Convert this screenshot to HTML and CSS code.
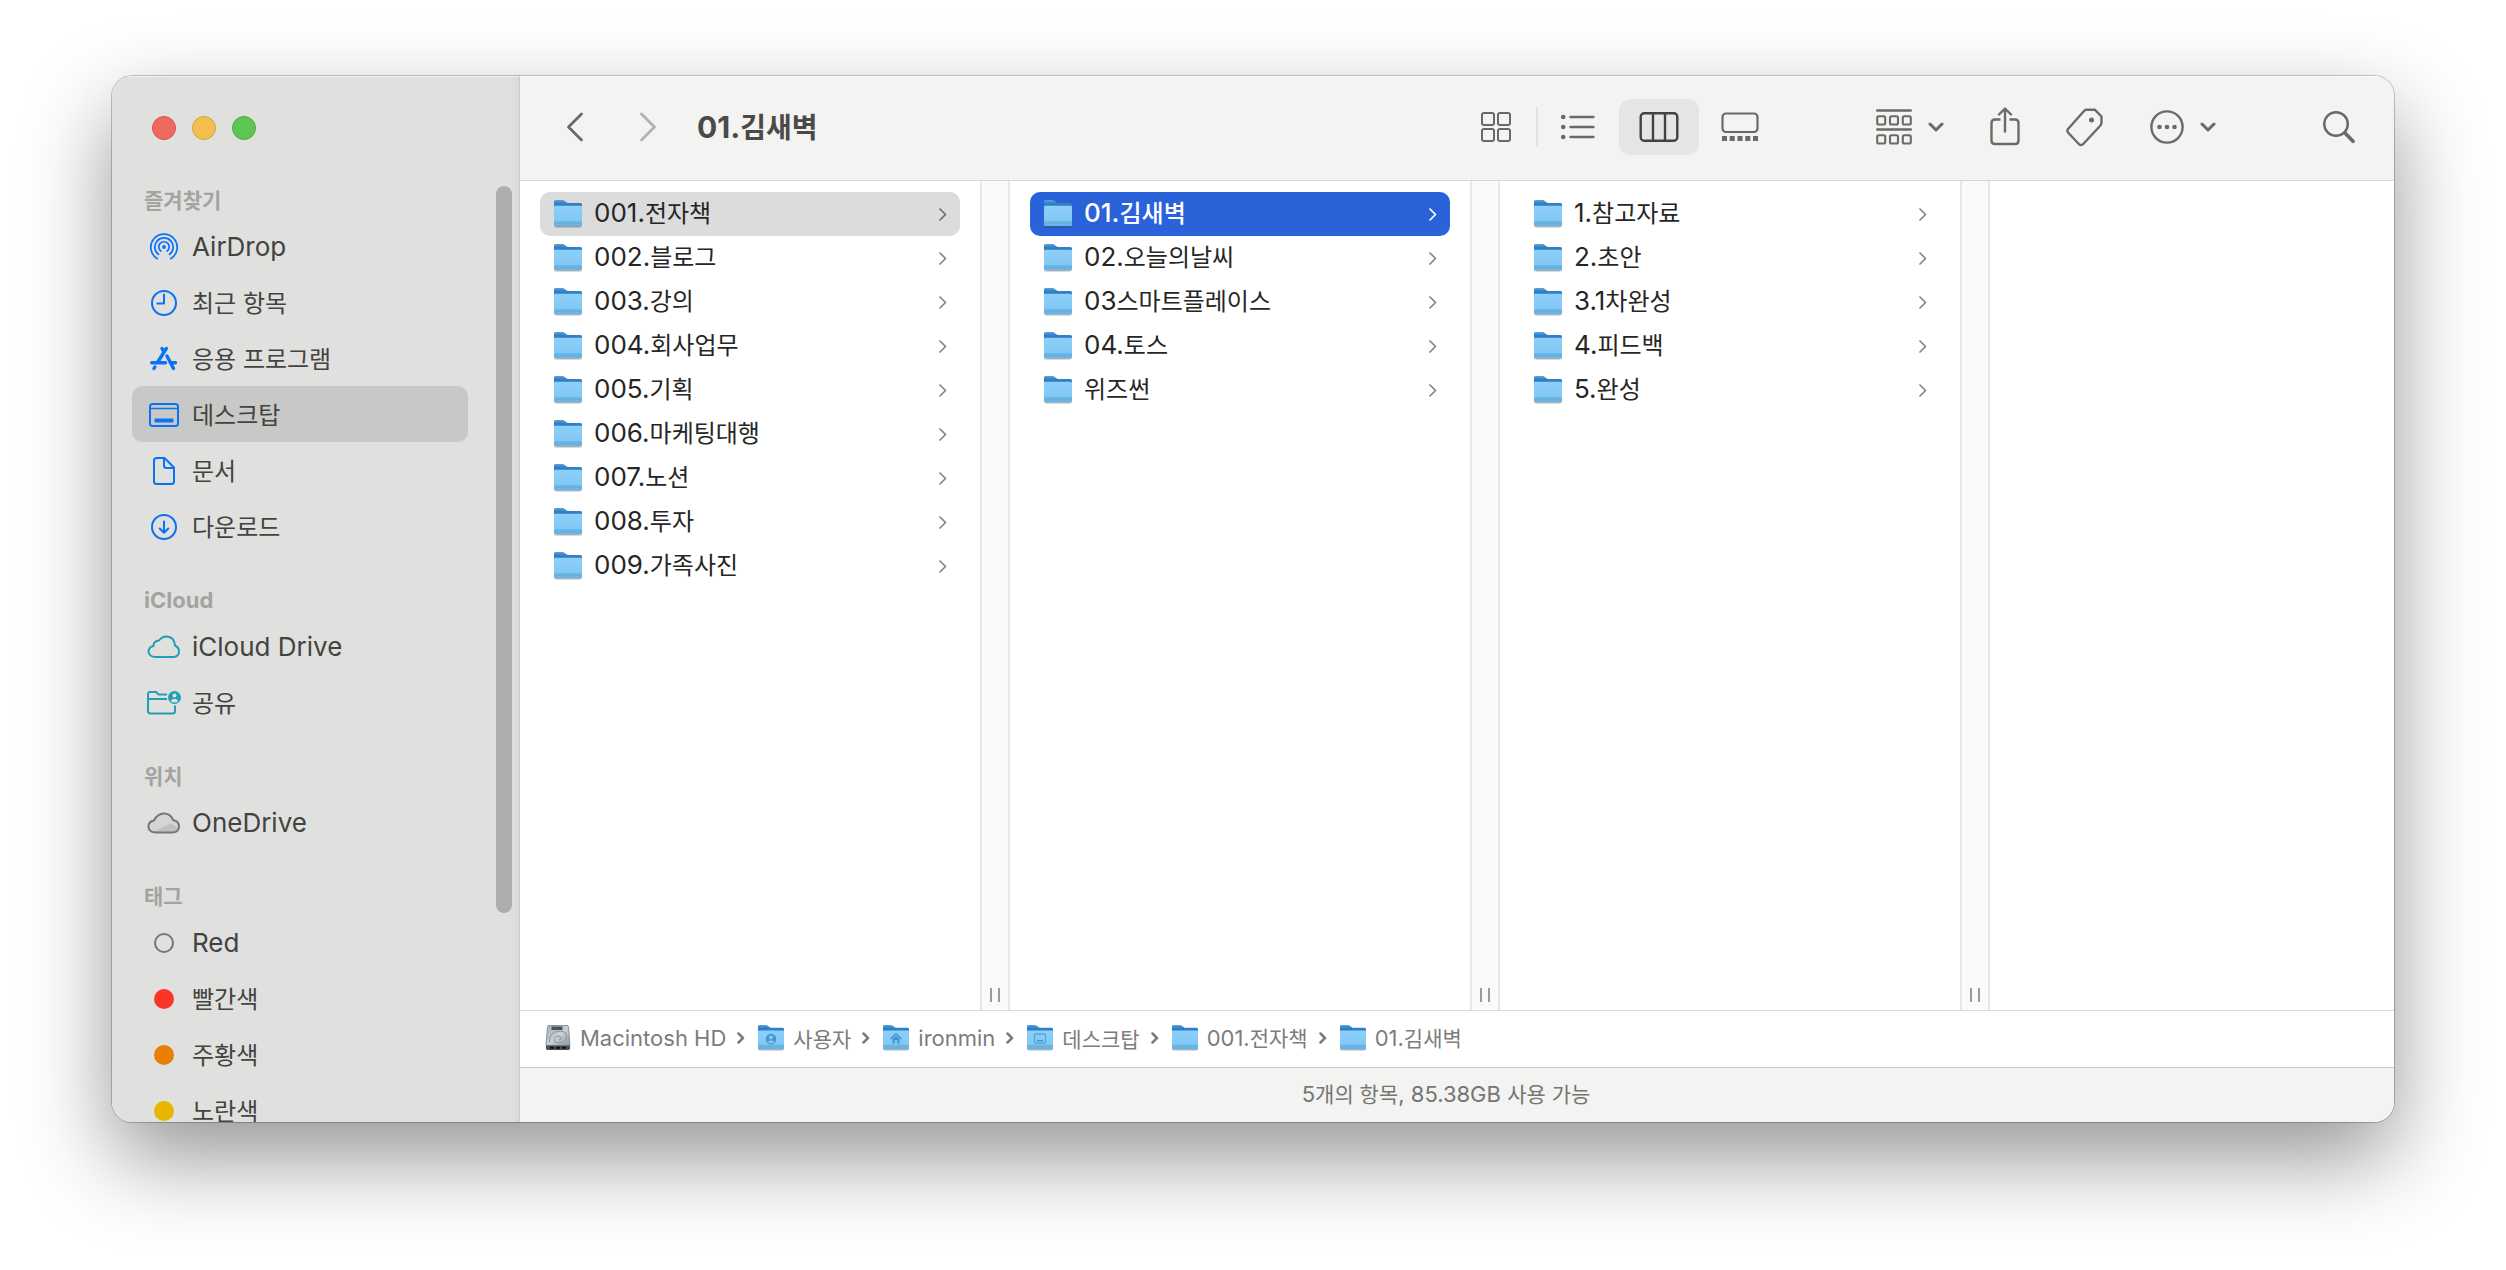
FILE: index.html
```html
<!DOCTYPE html>
<html lang="ko">
<head>
<meta charset="utf-8">
<title>01.김새벽</title>
<link rel="stylesheet" href="styles.css">
</head>
<body>
<svg class="sprite" aria-hidden="true">
  <defs>
    <linearGradient id="folder-back" x1="0" y1="0" x2="0" y2="1">
      <stop offset="0" stop-color="#58a5da"/><stop offset=".25" stop-color="#2f7ec6"/><stop offset="1" stop-color="#2f7ec6"/>
    </linearGradient>
    <linearGradient id="folder-front" x1="0" y1="0" x2="0" y2="1">
      <stop offset="0" stop-color="#8ccff9"/><stop offset=".75" stop-color="#82c8f5"/><stop offset=".8" stop-color="#70b9e8"/><stop offset="1" stop-color="#69b2e2"/>
    </linearGradient>
    <linearGradient id="drive-top" x1="0" y1="0" x2="1" y2="1">
      <stop offset="0" stop-color="#a3adb3"/><stop offset=".5" stop-color="#c6d0d5"/><stop offset="1" stop-color="#8f999f"/>
    </linearGradient>
    <symbol id="folder" viewBox="0 0 28 28">
      <rect x="0.5" y="5" width="27" height="22.5" rx="1.5" fill="#000" opacity=".28"/>
      <path d="M0 1.500Q0 0 1.500 0H8.500Q9.800 0 10.800 1L12 2Q13 3 14.200 3H26.500Q28 3 28 4.500V14H0Z" fill="url(#folder-back)"/>
      <path d="M0 7Q0 5.800 1.200 5.800H26.800Q28 5.800 28 7V25Q28 26.300 26.700 26.300H1.300Q0 26.300 0 25Z" fill="url(#folder-front)"/>
      <path d="M0 21.700H28M0 23.500H28" stroke="#5da7d8" stroke-width=".6"/>
    </symbol>
    <symbol id="chevron" viewBox="0 0 8 13"><path d="M1 1L6.500 6.500L1 12" fill="none" stroke="currentColor" stroke-width="1.700" stroke-linecap="round" stroke-linejoin="round"/></symbol>
    <symbol id="crumb" viewBox="0 0 8 12"><path d="M1.500 1.500L6 6L1.500 10.500" fill="none" stroke="currentColor" stroke-width="2.500" stroke-linecap="round" stroke-linejoin="round"/></symbol>
    <symbol id="down" viewBox="0 0 16 12"><path d="M2 3L8 9L14 3" fill="none" stroke="currentColor" stroke-width="3" stroke-linecap="round" stroke-linejoin="round"/></symbol>
  </defs>
</svg>

<div class="window">
  <aside class="sidebar">
    <div class="lights">
      <button class="light close" aria-label="닫기"></button>
      <button class="light minimize" aria-label="최소화"></button>
      <button class="light expand" aria-label="확대"></button>
    </div>
    <nav class="places">
      <section>
        <h2><span class="ko">즐겨찾기</span></h2>
        <ul>
          <li><a href="#"><svg class="blue" width="36" height="30" viewBox="0 0 36 30" fill="none" stroke="currentColor" stroke-width="1.700" stroke-linecap="round"><circle cx="18" cy="15" r="1.900" fill="currentColor" stroke="none"/><path d="M14.900 19.100A5.200 5.200 0 1 1 21.100 19.100M12.500 22.400A9.200 9.200 0 1 1 23.500 22.400M11.300 26.700A13.200 13.200 0 1 1 24.700 26.700"/></svg>AirDrop</a></li>
          <li><a href="#"><svg class="blue" width="36" height="30" viewBox="0 0 36 30" fill="none" stroke="currentColor" stroke-width="2" stroke-linecap="round" stroke-linejoin="round"><circle cx="18" cy="15" r="12"/><path d="M18 6.500V15.500H11.300"/></svg><span class="ko">최근 항목</span></a></li>
          <li><a href="#"><svg class="blue" width="36" height="30" viewBox="0 0 36 30" fill="none" stroke="currentColor" stroke-width="3.400" stroke-linecap="round"><path d="M16 4.500L17.500 7.200M20.300 4.500L11.500 18.500M5.700 18.800H19.500M8 24.500L8.900 23M21 12L27.500 24.500M25.500 18.800H29.500"/></svg><span class="ko">응용 프로그램</span></a></li>
          <li><a href="#" class="current" aria-current="page"><svg class="blue" width="36" height="30" viewBox="0 0 36 30" fill="none" stroke="currentColor" stroke-width="2"><rect x="4" y="4" width="28" height="22" rx="2.500"/><path d="M4 8.500H32" stroke-width="1.500"/><rect x="8.500" y="18.500" width="19" height="4" rx="1" fill="currentColor" stroke="none"/></svg><span class="ko">데스크탑</span></a></li>
          <li><a href="#"><svg class="blue" width="36" height="30" viewBox="0 0 36 30" fill="none" stroke="currentColor" stroke-width="2" stroke-linejoin="round"><path d="M11 2H18.500L28 11.500V25.500Q28 28 25.500 28H10.500Q8 28 8 25.500V4.500Q8 2 11 2ZM18 2V9.500Q18 12 20.500 12H28"/></svg><span class="ko">문서</span></a></li>
          <li><a href="#"><svg class="blue" width="36" height="30" viewBox="0 0 36 30" fill="none" stroke="currentColor" stroke-width="2" stroke-linecap="round" stroke-linejoin="round"><circle cx="18" cy="15" r="12"/><path d="M18 9.500V20.500M13.700 16.500L18 20.700L22.300 16.500"/></svg><span class="ko">다운로드</span></a></li>
        </ul>
      </section>
      <section>
        <h2>iCloud</h2>
        <ul>
          <li><a href="#"><svg class="teal" width="36" height="30" viewBox="0 0 36 30" fill="none" stroke="currentColor" stroke-width="2" stroke-linejoin="round"><path d="M9 25Q3 24.500 2.500 19.500Q2.800 15 7.500 14Q7.500 9 13 8.500Q16 4.500 20.500 4.500Q28.500 5 29 13.500Q33 15.500 33 19.500Q33 24 28 25Z"/></svg>iCloud Drive</a></li>
          <li><a href="#"><svg class="teal" width="36" height="30" viewBox="0 0 36 30" fill="none" stroke="currentColor" stroke-width="2" stroke-linejoin="round"><path d="M21 6.500H12.500L10 4H4Q2 4 2 6V23Q2 25.500 4.500 25.500H26.500Q29 25.500 29 23V17.500M2 11H21"/><circle cx="28.500" cy="9.500" r="6.500" fill="currentColor" stroke="none"/><circle cx="28.500" cy="7.500" r="2" fill="#e0e0de" stroke="none"/><path d="M24.800 13.200Q25.500 10.700 28.500 10.700T32.200 13.200Q30.500 14.600 28.500 14.600T24.800 13.200Z" fill="#e0e0de" stroke="none"/></svg><span class="ko">공유</span></a></li>
        </ul>
      </section>
      <section>
        <h2><span class="ko">위치</span></h2>
        <ul>
          <li><a href="#"><svg class="gray" width="36" height="30" viewBox="0 0 36 30"><path d="M9 24.500Q2.500 24 2.500 18.500Q2.500 13.500 8 12.500Q11.500 5.500 18 5.500Q24.500 5.500 27 12Q33 13 33 18.500Q33 24 27 24.500Z" fill="#d5d5d3"/><path d="M8 23.500L25 15.500L32 20Q31.500 24 27 24.500H9Z" fill="#c0c0be"/><path d="M9 24.500Q2.500 24 2.500 18.500Q2.500 13.500 8 12.500Q11.500 5.500 18 5.500Q24.500 5.500 27 12Q33 13 33 18.500Q33 24 27 24.500Z" fill="none" stroke="currentColor" stroke-width="2"/></svg>OneDrive</a></li>
        </ul>
      </section>
      <section>
        <h2><span class="ko">태그</span></h2>
        <ul>
          <li><a href="#"><i class="tag none"></i>Red</a></li>
          <li><a href="#"><i class="tag red"></i><span class="ko">빨간색</span></a></li>
          <li><a href="#"><i class="tag orange"></i><span class="ko">주황색</span></a></li>
          <li><a href="#"><i class="tag yellow"></i><span class="ko">노란색</span></a></li>
        </ul>
      </section>
    </nav>
    <div class="scroll-thumb"></div>
  </aside>

  <main class="main">
    <header class="toolbar">
      <div class="history">
        <button aria-label="뒤로"><svg width="18" height="30" viewBox="0 0 18 30"><path d="M15.500 2L2.500 15L15.500 28" fill="none" stroke="currentColor" stroke-width="2.800" stroke-linecap="round" stroke-linejoin="round"/></svg></button>
        <button aria-label="앞으로" disabled><svg width="18" height="30" viewBox="0 0 18 30"><path d="M2.500 2L15.500 15L2.500 28" fill="none" stroke="currentColor" stroke-width="2.800" stroke-linecap="round" stroke-linejoin="round"/></svg></button>
      </div>
      <h1>01.<span class="ko">김새벽</span></h1>
      <div class="views">
        <button aria-label="아이콘"><svg width="32" height="32" viewBox="0 0 32 32" fill="none" stroke="currentColor" stroke-width="2"><rect x="2" y="2" width="12" height="12" rx="2"/><rect x="18" y="2" width="12" height="12" rx="2"/><rect x="2" y="18" width="12" height="12" rx="2"/><rect x="18" y="18" width="12" height="12" rx="2"/></svg></button>
        <span class="rule"></span>
        <button aria-label="목록"><svg width="36" height="28" viewBox="0 0 36 28" stroke="currentColor" stroke-width="2.400" stroke-linecap="round"><g fill="currentColor" stroke="none"><circle cx="3.200" cy="4" r="2.300"/><circle cx="3.200" cy="14" r="2.300"/><circle cx="3.200" cy="24" r="2.300"/></g><path d="M10.500 4H33.500M10.500 14H33.500M10.500 24H33.500"/></svg></button>
        <button class="on" aria-label="계층" aria-pressed="true"><svg width="40" height="32" viewBox="0 0 40 32" fill="none" stroke="currentColor" stroke-width="2.400"><rect x="1.700" y="2.200" width="36.600" height="27.600" rx="3.500"/><path d="M14 2V30M26 2V30"/></svg></button>
        <button aria-label="갤러리"><svg width="38" height="32" viewBox="0 0 38 32" fill="none" stroke="currentColor" stroke-width="2.200"><rect x="1.500" y="2.500" width="35" height="18.500" rx="3.500"/><g fill="currentColor" stroke="none"><rect x="1" y="25" width="5" height="5"/><rect x="8.700" y="25" width="5" height="5"/><rect x="16.500" y="25" width="5" height="5"/><rect x="24.300" y="25" width="5" height="5"/><rect x="32" y="25" width="5" height="5"/></g></svg></button>
      </div>
      <div class="actions">
        <button aria-label="그룹"><svg width="36" height="36" viewBox="0 0 36 36" fill="none" stroke="currentColor" stroke-width="2.100"><path d="M1.200 1.500H34.800M1.200 20.500H34.800" stroke-width="2.400" stroke-linecap="round"/><rect x="1.200" y="7.300" width="8" height="8.200" rx="1.500"/><rect x="14" y="7.300" width="8" height="8.200" rx="1.500"/><rect x="26.800" y="7.300" width="8" height="8.200" rx="1.500"/><rect x="1.200" y="26.300" width="8" height="8.200" rx="1.500"/><rect x="14" y="26.300" width="8" height="8.200" rx="1.500"/><rect x="26.800" y="26.300" width="8" height="8.200" rx="1.500"/></svg><svg width="16" height="12"><use href="#down"/></svg></button>
        <button aria-label="공유"><svg width="30" height="40" viewBox="0 0 30 40" fill="none" stroke="currentColor" stroke-width="2.400" stroke-linecap="round" stroke-linejoin="round"><path d="M10.500 12.500H5Q1.500 12.500 1.500 16V33.500Q1.500 37 5 37H25Q28.500 37 28.500 33.500V16Q28.500 12.500 25 12.500H19.500" stroke-linecap="butt"/><path d="M15 24.500V2M9 7.500L15 1.500L21 7.500"/></svg></button>
        <button aria-label="태그"><svg width="38" height="40" viewBox="0 0 38 40" fill="none" stroke="currentColor" stroke-width="2.400" stroke-linejoin="round"><path d="M18.500 3.500L2 22Q0.900 23.700 2 25.500L13 37.200Q15 39 17 37.200L34 19Q35.500 17.500 35.500 15.500V9.500L29 2.800H20.500Q19.200 2.800 18.500 3.500Z"/><circle cx="25.500" cy="13" r="2.500" fill="currentColor" stroke="none"/></svg></button>
        <button aria-label="기타"><svg width="34" height="36" viewBox="0 0 34 36" fill="none" stroke="currentColor" stroke-width="2.400"><circle cx="17" cy="18" r="15.600"/><g fill="currentColor" stroke="none"><circle cx="9.500" cy="18" r="2.300"/><circle cx="17" cy="18" r="2.300"/><circle cx="24.500" cy="18" r="2.300"/></g></svg><svg width="16" height="12"><use href="#down"/></svg></button>
        <button class="search" aria-label="검색"><svg width="32" height="36" viewBox="0 0 32 36" fill="none" stroke="currentColor"><circle cx="13" cy="15" r="11.800" stroke-width="2.500"/><path d="M22 24L30 32.200" stroke-width="3.700" stroke-linecap="round"/></svg></button>
      </div>
    </header>

    <div class="browser">
      <ul class="column">
        <li><a href="#" class="trail"><svg class="folder"><use href="#folder"/></svg><span class="name">001.<span class="ko">전자책</span></span><svg class="more"><use href="#chevron"/></svg></a></li>
        <li><a href="#"><svg class="folder"><use href="#folder"/></svg><span class="name">002.<span class="ko">블로그</span></span><svg class="more"><use href="#chevron"/></svg></a></li>
        <li><a href="#"><svg class="folder"><use href="#folder"/></svg><span class="name">003.<span class="ko">강의</span></span><svg class="more"><use href="#chevron"/></svg></a></li>
        <li><a href="#"><svg class="folder"><use href="#folder"/></svg><span class="name">004.<span class="ko">회사업무</span></span><svg class="more"><use href="#chevron"/></svg></a></li>
        <li><a href="#"><svg class="folder"><use href="#folder"/></svg><span class="name">005.<span class="ko">기획</span></span><svg class="more"><use href="#chevron"/></svg></a></li>
        <li><a href="#"><svg class="folder"><use href="#folder"/></svg><span class="name">006.<span class="ko">마케팅대행</span></span><svg class="more"><use href="#chevron"/></svg></a></li>
        <li><a href="#"><svg class="folder"><use href="#folder"/></svg><span class="name">007.<span class="ko">노션</span></span><svg class="more"><use href="#chevron"/></svg></a></li>
        <li><a href="#"><svg class="folder"><use href="#folder"/></svg><span class="name">008.<span class="ko">투자</span></span><svg class="more"><use href="#chevron"/></svg></a></li>
        <li><a href="#"><svg class="folder"><use href="#folder"/></svg><span class="name">009.<span class="ko">가족사진</span></span><svg class="more"><use href="#chevron"/></svg></a></li>
      </ul>
      <div class="divider"><span class="grip"></span></div>
      <ul class="column">
        <li><a href="#" class="selected"><svg class="folder"><use href="#folder"/></svg><span class="name">01.<span class="ko">김새벽</span></span><svg class="more"><use href="#chevron"/></svg></a></li>
        <li><a href="#"><svg class="folder"><use href="#folder"/></svg><span class="name">02.<span class="ko">오늘의날씨</span></span><svg class="more"><use href="#chevron"/></svg></a></li>
        <li><a href="#"><svg class="folder"><use href="#folder"/></svg><span class="name">03<span class="ko">스마트플레이스</span></span><svg class="more"><use href="#chevron"/></svg></a></li>
        <li><a href="#"><svg class="folder"><use href="#folder"/></svg><span class="name">04.<span class="ko">토스</span></span><svg class="more"><use href="#chevron"/></svg></a></li>
        <li><a href="#"><svg class="folder"><use href="#folder"/></svg><span class="name"><span class="ko">위즈썬</span></span><svg class="more"><use href="#chevron"/></svg></a></li>
      </ul>
      <div class="divider"><span class="grip"></span></div>
      <ul class="column">
        <li><a href="#"><svg class="folder"><use href="#folder"/></svg><span class="name">1.<span class="ko">참고자료</span></span><svg class="more"><use href="#chevron"/></svg></a></li>
        <li><a href="#"><svg class="folder"><use href="#folder"/></svg><span class="name">2.<span class="ko">초안</span></span><svg class="more"><use href="#chevron"/></svg></a></li>
        <li><a href="#"><svg class="folder"><use href="#folder"/></svg><span class="name">3.1<span class="ko">차완성</span></span><svg class="more"><use href="#chevron"/></svg></a></li>
        <li><a href="#"><svg class="folder"><use href="#folder"/></svg><span class="name">4.<span class="ko">피드백</span></span><svg class="more"><use href="#chevron"/></svg></a></li>
        <li><a href="#"><svg class="folder"><use href="#folder"/></svg><span class="name">5.<span class="ko">완성</span></span><svg class="more"><use href="#chevron"/></svg></a></li>
      </ul>
      <div class="divider"><span class="grip"></span></div>
    </div>

    <ol class="path">
      <li><a href="#"><svg width="26" height="28" viewBox="0 0 26 28"><path d="M4 1.500H22Q23.300 1.500 23.500 3L25 21.500H1L2.500 3Q2.700 1.500 4 1.500Z" fill="url(#drive-top)" stroke="#8a949a" stroke-width="1"/><path d="M1 21.500H25V24.500Q25 26 23 26H3Q1 26 1 24.500Z" fill="#4a5054"/><path d="M5 23.700H9M11 23.700H15M17 23.700H21" stroke="#111" stroke-width="2"/><rect x="6.500" y="2.500" width="11" height="3.500" fill="#4a5257"/><path d="M4.500 18Q4 7.500 15 7Q22 7.500 21.500 13Q21 18.500 13.500 19Q8 18 9.500 14Q12 10.500 16 13.500Q17 15.500 14 16" fill="none" stroke="#8a959b"/></svg><span>Macintosh HD</span></a><svg class="crumb"><use href="#crumb"/></svg></li>
      <li><a href="#"><svg width="26" height="26" viewBox="0 0 26 26"><use href="#folder" width="26" height="26"/><circle cx="13" cy="14" r="5.200" fill="#4594cf"/><circle cx="13" cy="12.500" r="2" fill="#82c8f5"/><path d="M9.500 17Q13 13.500 16.500 17Q13 19.500 9.500 17Z" fill="#82c8f5"/></svg><span class="ko">사용자</span></a><svg class="crumb"><use href="#crumb"/></svg></li>
      <li><a href="#"><svg width="26" height="26" viewBox="0 0 26 26"><use href="#folder" width="26" height="26"/><path d="M7.500 14L13 8.800L18.500 14" fill="none" stroke="#4594cf" stroke-width="1.500"/><path d="M9.500 14L13 10.800L16.500 14V18.500H14.300V15H11.700V18.500H9.500Z" fill="#4594cf"/></svg><span>ironmin</span></a><svg class="crumb"><use href="#crumb"/></svg></li>
      <li><a href="#"><svg width="26" height="26" viewBox="0 0 26 26"><use href="#folder" width="26" height="26"/><rect x="7.500" y="9" width="11" height="9" rx="1" fill="none" stroke="#5ba5d8" stroke-width="1.300"/><path d="M10 15.700H16" stroke="#4594cf" stroke-width="1.400"/></svg><span class="ko">데스크탑</span></a><svg class="crumb"><use href="#crumb"/></svg></li>
      <li><a href="#"><svg width="26" height="26"><use href="#folder"/></svg><span>001.<span class="ko">전자책</span></span></a><svg class="crumb"><use href="#crumb"/></svg></li>
      <li><a href="#"><svg width="26" height="26"><use href="#folder"/></svg><span>01.<span class="ko">김새벽</span></span></a></li>
    </ol>
    <footer class="status"><p>5<span class="ko">개의 항목</span>, 85.38GB <span class="ko">사용 가능</span></p></footer>
  </main>
</div>
</body>
</html>
```
FILE: styles.css
```css
* {
  box-sizing: border-box;
  margin: 0;
  padding: 0;
}

body {
  display: flex;
  height: 100vh;
  padding: 76px 112px 148px;
  background: #fff;
  color: #262626;
  font-family: Inter, "Noto Sans CJK KR", sans-serif;
  font-size: 26px;
  line-height: 32px;
}

ul, ol { list-style: none; }
a { color: inherit; text-decoration: none; }
svg { display: block; flex: none; }

button {
  display: flex;
  align-items: center;
  justify-content: center;
  border: 0;
  background: none;
  color: inherit;
  font: inherit;
}

/* Hangul is set a step smaller than the Latin text beside it */
.ko {
  font-family: "Noto Sans CJK KR", sans-serif;
  font-size: 24px;
  line-height: 1;
}

.sprite {
  position: absolute;
  width: 0;
  height: 0;
}

.window {
  display: flex;
  flex: 1;
  min-width: 0;
  overflow: hidden;
  border-radius: 20px;
  background: #fff;
  box-shadow: 0 0 0 1px rgba(0, 0, 0, .22), 0 36px 88px rgba(0, 0, 0, .42);
}

/* Sidebar */
.sidebar {
  position: relative;
  display: flex;
  flex: 0 0 408px;
  flex-direction: column;
  overflow: hidden;
  border-right: 1px solid #cbcbc9;
  background: linear-gradient(to left, #d8d8d6, #e0e0de 8px);
  color: #434341;
  box-shadow: inset 0 1px #f2f2f0;
}

.lights {
  display: flex;
  flex: none;
  align-items: center;
  gap: 16px;
  height: 104px;
  padding-left: 40px;
}

.light {
  width: 24px;
  height: 24px;
  border: 1px solid;
  border-radius: 50%;
}

.close { background: #ec6a5e; border-color: #d55448; }
.minimize { background: #f5bf4f; border-color: #d9a03c; }
.expand { background: #61c554; border-color: #4ea73f; }

.places {
  flex: 1;
  min-height: 0;
  overflow: hidden;
  padding: 2px 51px 0 20px;
}

.places section { margin-bottom: 28px; }

.places h2 {
  height: 36px;
  padding-left: 12px;
  color: #a3a3a1;
  font-size: 22px;
  font-weight: 700;
  line-height: 36px;
}

.places h2 .ko,
.path .ko,
.status .ko { font-size: 21px; }

.places a {
  display: flex;
  align-items: center;
  gap: 10px;
  height: 56px;
  padding: 2px 14px 0;
  border-radius: 10px;
}

.places a .ko { padding-bottom: 3px; }
.places .current { background: #c8c8c6; }

.blue { color: #0a73f5; }
.teal { color: #239eb8; }
.gray { color: #767674; }

.tag {
  width: 20px;
  height: 20px;
  margin: 0 8px;
  border-radius: 50%;
}

.tag.none { border: 2px solid #767674; }
.tag.red { background: #fb3529; }
.tag.orange { background: #e78000; }
.tag.yellow { background: #e7b400; }

.scroll-thumb {
  position: absolute;
  top: 110px;
  right: 7px;
  width: 16px;
  height: 727px;
  border-radius: 8px;
  background: #aeaeac;
}

/* Main pane */
.main {
  display: flex;
  flex: 1;
  flex-direction: column;
  min-width: 0;
}

.toolbar {
  display: flex;
  flex: none;
  align-items: center;
  height: 105px;
  padding: 0 39px 2px 46px;
  border-bottom: 1px solid #d6d6d4;
  background: #f3f3f1;
  color: #6a6a68;
  box-shadow: inset 0 1px #fff;
}

.history {
  display: flex;
  gap: 55px;
}

.history button:disabled { color: #b2b2b0; }

.toolbar h1 {
  margin-left: 40px;
  color: #4a4a48;
  font-size: 30px;
  font-weight: 700;
  line-height: 40px;
}

.toolbar h1 .ko { font-size: 28px; }

.views {
  display: flex;
  align-items: center;
  gap: 1px;
  margin-left: auto;
}

.views button {
  width: 80px;
  height: 56px;
  border-radius: 12px;
}

.views .on {
  background: #e5e5e4;
  color: #424240;
}

.rule {
  width: 2px;
  height: 40px;
  margin: 0 -1px;
  background: #e2e2e0;
}

.actions {
  display: flex;
  align-items: center;
  gap: 46px;
  margin-left: 96px;
}

.actions button { gap: 16px; }
.actions .search { margin-left: 61px; }

.browser {
  display: flex;
  flex: 1;
  min-height: 0;
}

.column {
  flex: 0 0 460px;
  padding: 11px 20px;
}

.column a {
  display: flex;
  align-items: center;
  height: 44px;
  padding: 0 13px 0 14px;
  border-radius: 10px;
}

.column .trail { background: #dcdcdc; }
.column .selected { background: #2962d9; color: #fff; font-weight: 500; }

.folder {
  width: 28px;
  height: 28px;
}

.name {
  flex: 1;
  padding: 0 0 3px 12px;
}

.more {
  width: 8px;
  height: 13px;
  color: #868686;
}

.trail .more { color: #6e6e6e; }
.selected .more { color: #fff; }

.divider {
  display: flex;
  flex: 0 0 30px;
  align-items: flex-end;
  justify-content: center;
  padding-bottom: 8px;
  border: solid #e7e7e7;
  border-width: 0 2px;
  background: #fafafa;
}

.grip {
  width: 10px;
  height: 14px;
  border: solid #9b9b9b;
  border-width: 0 2px;
}

.path {
  display: flex;
  flex: none;
  align-items: center;
  height: 58px;
  padding: 0 0 2px 25px;
  border-top: 1px solid #dadada;
  border-bottom: 1px solid #c9c9c8;
  color: #7c7c7c;
  font-size: 22px;
}

.path li, .path a {
  display: flex;
  align-items: center;
}

.path a { gap: 9px; }

.crumb {
  width: 8px;
  height: 12px;
  margin: 0 13px 0 11px;
}

.status {
  flex: none;
  height: 54px;
  padding-right: 22px;
  background: #f3f3f1;
  color: #757573;
  font-size: 22px;
  line-height: 52px;
  text-align: center;
}
```
